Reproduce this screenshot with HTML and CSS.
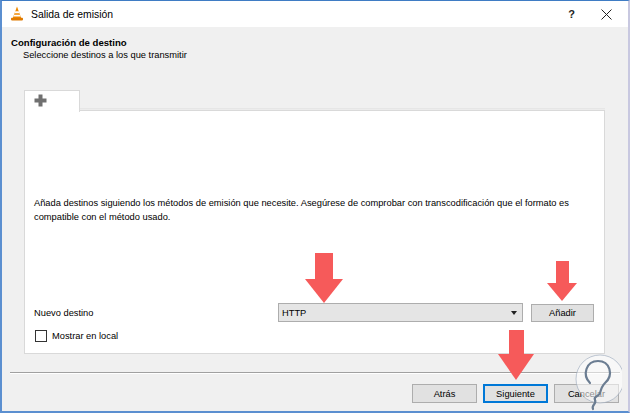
FILE: index.html
```html
<!DOCTYPE html>
<html lang="es">
<head>
<meta charset="utf-8">
<title>Salida de emisión</title>
<link rel="stylesheet" href="styles.css">
</head>
<body>
<div class="window">
  <div class="titlebar">
    <svg class="vlc" width="14" height="15" viewBox="0 0 14 15">
      <path d="M7 0.5 L11.2 12 L2.8 12 Z" fill="#f08a00"/>
      <path d="M5.2 5.2 L8.8 5.2 L9.5 7.2 L4.5 7.2 Z" fill="#fff"/>
      <path d="M4 8.8 L10 8.8 L10.6 10.4 L3.4 10.4 Z" fill="#fff"/>
      <rect x="1" y="11.8" width="12" height="2.6" rx="0.8" fill="#e07a00"/>
    </svg>
    <span class="title">Salida de emisión</span>
    <span class="help">?</span>
    <svg class="close" width="11" height="11" viewBox="0 0 11 11">
      <path d="M0.5 0.5 L10.5 10.5 M10.5 0.5 L0.5 10.5" stroke="#222" stroke-width="1"/>
    </svg>
  </div>
  <div class="body">
    <div class="header">
      <div class="h-title">Configuración de destino</div>
      <div class="h-sub">Seleccione destinos a los que transmitir</div>
    </div>
    <div class="tabs">
      <div class="tabbar">
        <div class="tab">
          <svg width="13" height="13" viewBox="0 0 13 13">
            <path d="M4.5 0.5 H8.5 V4.5 H12.5 V8.5 H8.5 V12.5 H4.5 V8.5 H0.5 V4.5 H4.5 Z" fill="#707070"/>
          </svg>
        </div>
        <div class="tabline"></div>
      </div>
      <div class="pane">
        <p class="desc">Añada destinos siguiendo los métodos de emisión que necesite. Asegúrese de comprobar con transcodificación que el formato es compatible con el método usado.</p>
        <div class="form-row">
          <span class="label">Nuevo destino</span>
          <div class="combo"><span>HTTP</span><span class="caret"></span></div>
          <button class="btn add">Añadir</button>
        </div>
        <label class="check"><span class="box"></span>Mostrar en local</label>
      </div>
    </div>
    <div class="separator"></div>
    <div class="footer">
      <button class="btn">Atrás</button>
      <button class="btn primary">Siguiente</button>
      <button class="btn">Cancelar</button>
    </div>
  </div>

  <div class="arrow a1"><div class="shaft"></div><div class="head"></div></div>
  <div class="arrow a2"><div class="shaft"></div><div class="head"></div></div>
  <div class="arrow a3"><div class="shaft"></div><div class="head"></div></div>

  <svg class="watermark" width="48" height="60" viewBox="0 0 48 60">
    <circle cx="26" cy="26" r="24" fill="rgba(255,255,255,0.55)" stroke="rgba(150,165,185,0.6)" stroke-width="1"/>
    <path d="M16 30 C8 22 12 8 24 8 C36 8 40 22 31 30 C28 33 27 36 26 40 C25 44 19 43 21 47 C23 51 17 52 19 56" fill="none" stroke="#6b7d92" stroke-width="2.2" stroke-linecap="round"/>
  </svg>
</div>
</body>
</html>
```

FILE: styles.css
```css
* { box-sizing: border-box; }
html, body { margin: 0; padding: 0; }
body {
  width: 630px;
  height: 413px;
  overflow: hidden;
  font-family: "Liberation Sans", Arial, sans-serif;
  font-size: 9.3px;
  color: #000;
  background: #f0f0f0;
}
.window {
  position: relative;
  width: 630px;
  height: 413px;
  display: flex;
  flex-direction: column;
  border-top: 1px solid #3f7cc4;
  border-left: 2px solid #5b8fd0;
  border-right: 2px solid #c8c8e0;
  border-bottom: 2px solid #5b8fd0;
  background: #f0f0f0;
}
.titlebar {
  height: 26px;
  background: #fff;
  display: flex;
  align-items: center;
  padding-left: 8px;
  padding-right: 16px;
  flex-shrink: 0;
}
.vlc { margin-right: 7px; margin-top: -1px; }
.title { font-size: 10.4px; flex: 1; }
.help { font-size: 11px; font-weight: bold; color: #222; margin-right: 26px; }
.close { margin-top: 1px; }
.body {
  flex: 1;
  display: flex;
  flex-direction: column;
}
.header { padding: 10px 0 0 9px; }
.h-title { font-weight: bold; font-size: 9.6px; line-height: 12px; }
.h-sub { padding-left: 12px; line-height: 12px; }
.tabs {
  margin: 29px 23px 0 22px;
  display: flex;
  flex-direction: column;
}
.tabbar { display: flex; align-items: flex-end; height: 21px; }
.tab {
  width: 56px;
  height: 22px;
  background: #fff;
  border: 1px solid #d9d9d9;
  border-bottom: none;
  padding: 3px 0 0 9px;
  position: relative;
  z-index: 1;
  margin-bottom: -1px;
}
.tabline {
  flex: 1;
  height: 3px;
  border-bottom: 1px solid #d9d9d9;
  border-top: 1px solid #e6e6e6;
  background: #ececec;
}
.pane {
  height: 243px;
  background: #fff;
  border: 1px solid #d9d9d9;
  border-top: none;
  display: flex;
  flex-direction: column;
  padding: 85px 10px 10px 9px;
}
.desc { margin: 0; line-height: 14px; }
.form-row {
  margin-top: auto;
  display: flex;
  align-items: center;
  gap: 8px;
  height: 19px;
}
.label { flex: 1; }
.combo {
  width: 245px;
  height: 19px;
  background: #e5e5e5;
  border: 1px solid #adadad;
  display: flex;
  align-items: center;
  justify-content: space-between;
  padding: 0 5px 0 3px;
}
.caret {
  width: 0; height: 0;
  border-left: 3.5px solid transparent;
  border-right: 3.5px solid transparent;
  border-top: 4px solid #222;
}
.btn {
  font-family: inherit;
  font-size: 9.3px;
  background: #e1e1e1;
  border: 1px solid #adadad;
  color: #000;
  padding: 0;
  height: 19px;
  width: 63px;
  margin: 0;
}
.add { height: 18px; }
.check {
  display: flex;
  align-items: center;
  margin-top: 7px;
  height: 14px;
}
.box {
  width: 12px; height: 12px;
  border: 1px solid #333;
  background: #fff;
  margin: 0 5px 0 1px;
}
.separator {
  margin: 18px 8px 0 8px;
  height: 2px;
  border-top: 1px solid #a0a0a0;
  border-bottom: 1px solid #fff;
}
.footer {
  display: flex;
  justify-content: flex-end;
  gap: 6px;
  padding: 10px 9px 0 0;
}
.footer .btn { width: 65px; height: 19px; }
.primary { border: 2px solid #0078d7; }

.arrow {
  position: absolute;
  display: flex;
  flex-direction: column;
  align-items: center;
}
.arrow .shaft { background: #f65a5a; }
.arrow .head {
  width: 0; height: 0;
  border-left-style: solid;
  border-right-style: solid;
  border-top-style: solid;
  border-left-color: transparent;
  border-right-color: transparent;
  border-top-color: #f65a5a;
}
.a1 { left: 303px; top: 252px; }
.a1 .shaft { width: 18px; height: 26px; }
.a1 .head { border-left-width: 19px; border-right-width: 19px; border-top-width: 24px; }
.a2 { left: 545px; top: 260px; }
.a2 .shaft { width: 13px; height: 22px; }
.a2 .head { border-left-width: 15px; border-right-width: 15px; border-top-width: 18px; }
.a3 { left: 496px; top: 329px; }
.a3 .shaft { width: 15px; height: 24px; }
.a3 .head { border-left-width: 18px; border-right-width: 18px; border-top-width: 26px; }
.watermark { position: absolute; left: 572px; top: 352px; }
```
